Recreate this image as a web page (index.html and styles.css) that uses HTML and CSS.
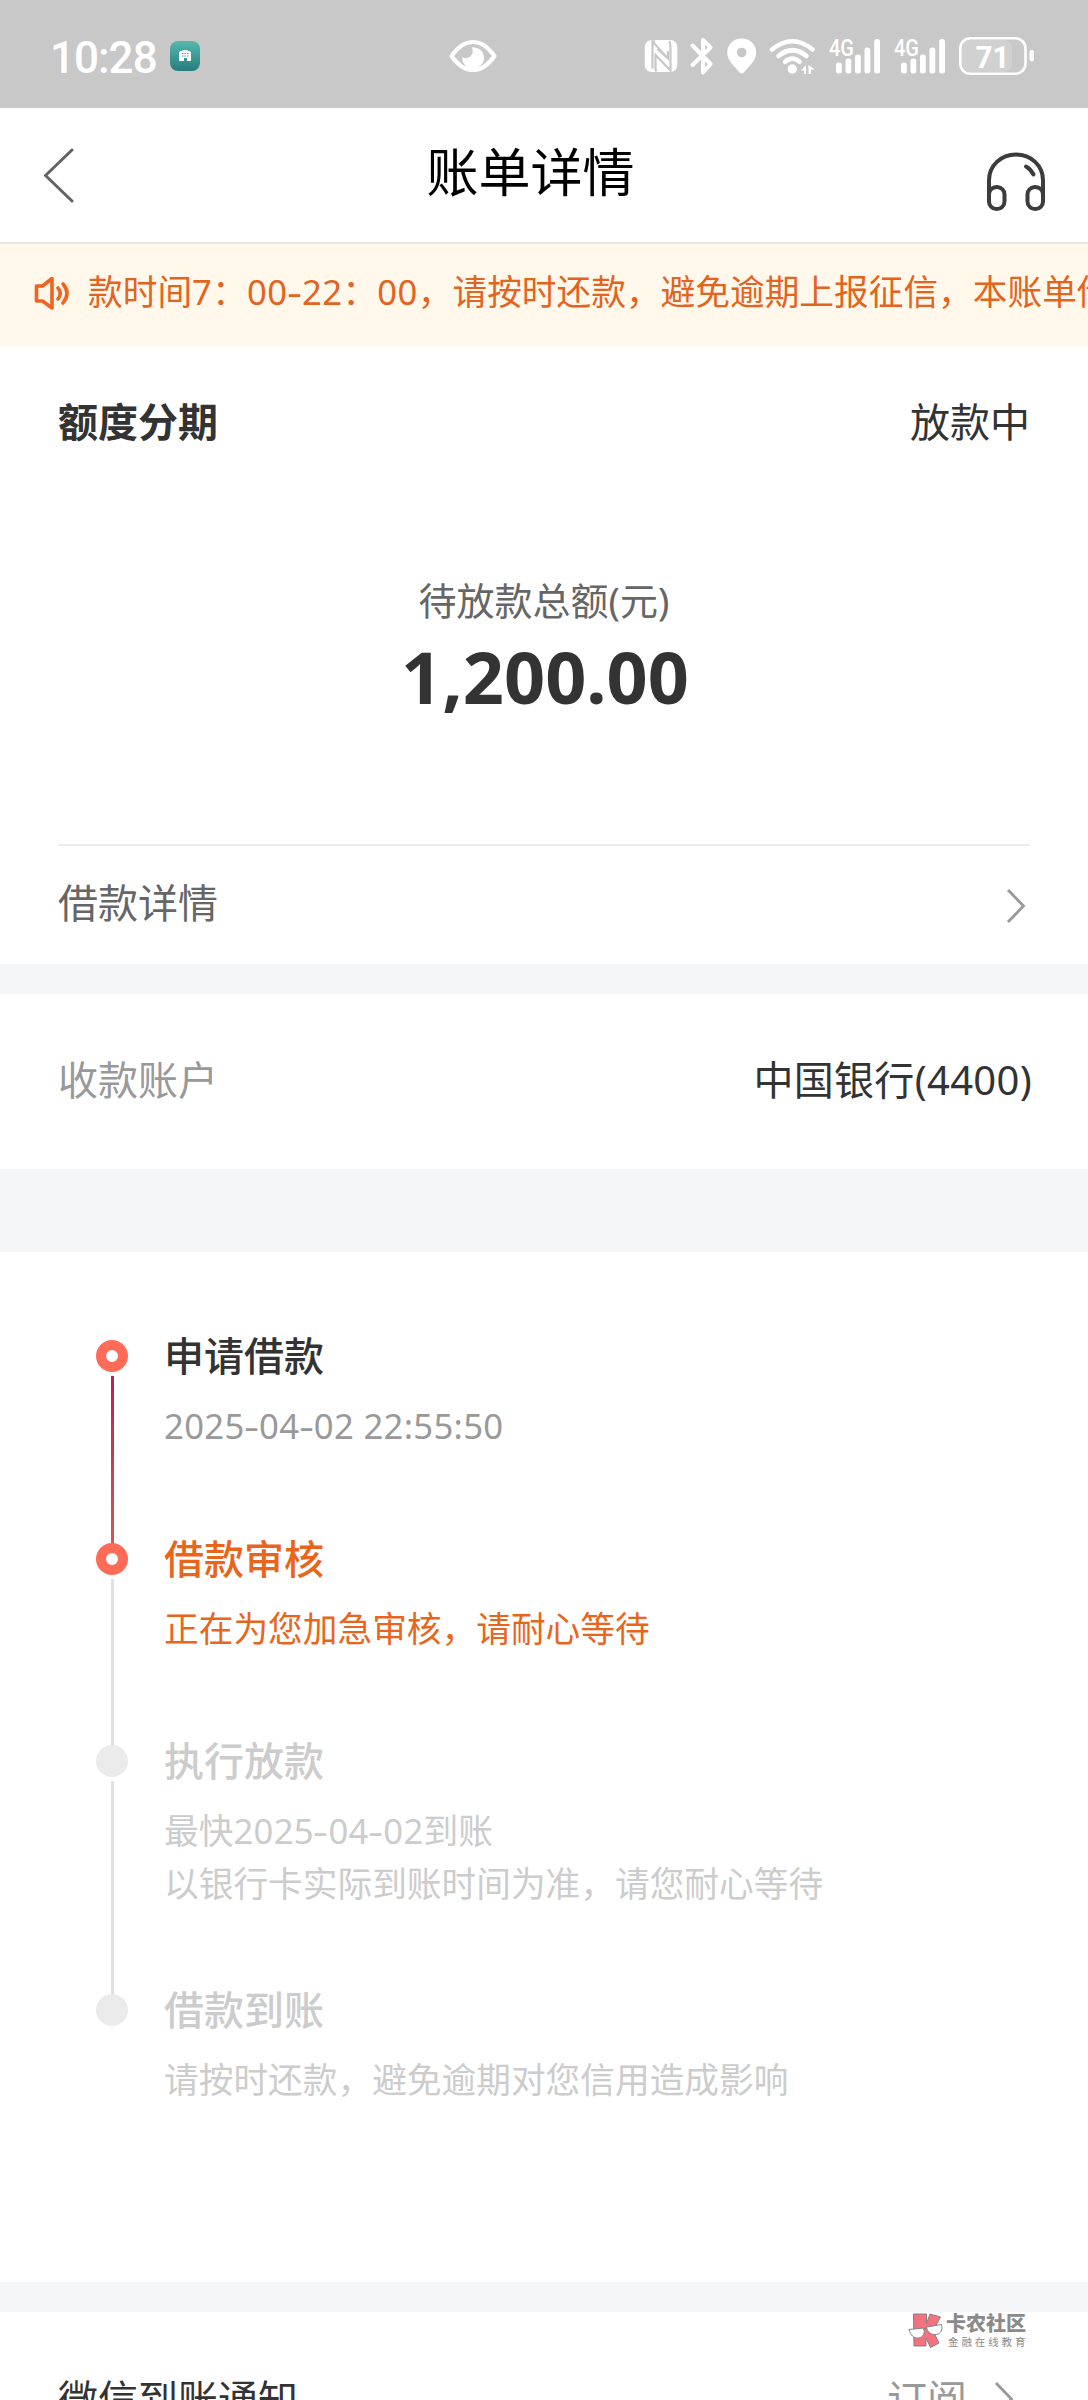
FILE: index.html
```html
<!DOCTYPE html>
<html lang="zh-CN">
<head>
<meta charset="utf-8">
<title>账单详情</title>
<link rel="stylesheet" href="styles.css">
</head>
<body>
<div class="page">
  <div class="status">
    <span class="clock">10:28</span>
    <svg class="app-icon" width="30" height="30" viewBox="0 0 30 30">
      <defs><linearGradient id="teal" x1="0" y1="0" x2="0" y2="1"><stop offset="0" stop-color="#55b9ae"/><stop offset="1" stop-color="#287c7e"/></linearGradient></defs>
      <rect width="30" height="30" rx="8" fill="url(#teal)"/>
      <path d="M9 20V12q0-2 2-2h1l1-1h4l1 1h1q2 0 2 2v8h-4v-3h-3v3z" fill="#fff"/>
      <path d="M12 12.500h1.500M14.500 12.500h1.500M17 12.500h1.500M12 15h1.500M14.500 15h1.500M17 15h1.500" stroke="#4c9d9a" stroke-width="1.200"/>
    </svg>
    <svg class="eye" width="48" height="34" viewBox="0 0 48 34">
      <path d="M2.500 17C9 7.500 16 3 24 3s15 4.500 21.500 14C39 26.500 32 31 24 31S9 26.500 2.500 17z" fill="none" stroke="#fff" stroke-width="4" stroke-linejoin="round"/>
      <path d="M23 8.200a10.800 10.800 0 1 1-9.600 9.500c1.600 1.800 4.600 1.900 7 .3 3.500-2.300 4-5.800 2.600-9.800z" fill="#fff"/>
    </svg>
    <svg class="tray" width="392" height="40" viewBox="644 36 392 40" fill="#fff">
      <rect x="644.700" y="40" width="32.600" height="32" rx="7"/>
      <path d="M652.500 68.500V41.500L668 58.500V51M655 41l-2.500 1M669.500 41q1 3 1 8v21.500L655.500 55v6M655.500 55v13.500q0 2 1 3M657.500 49l10.500 9.500" fill="none" stroke="#c8c8c8" stroke-width="2.200"/>
      <path d="M692.500 45.500L710.500 64l-7.500 8.500V40l7.500 7.500-18 17.500" fill="none" stroke="#fff" stroke-width="4" stroke-linecap="round" stroke-linejoin="round"/>
      <path fill-rule="evenodd" d="M741.700 38.500c-8 0-14.500 6-14.500 14 0 8.500 8 14.500 11.500 19 2 2.500 4 2.500 6 0 3.500-4.500 11.500-10.500 11.500-19 0-8-6.500-14-14.500-14zm0 9.200a4.800 4.800 0 1 1 0 9.600 4.800 4.800 0 0 1 0-9.600z"/>
      <g fill="none" stroke="#fff" stroke-width="4.600" stroke-linecap="round">
        <path d="M772 49.500Q792.500 33 812.500 49.500"/>
        <path d="M778.500 56Q792.500 44.500 806.500 56"/>
        <path d="M785 61.800Q792.500 55.500 799.500 61.800"/>
      </g>
      <circle cx="792.300" cy="69" r="4.700"/>
      <path d="M801 70.500l5-5.500v9h-2v-3.500zM808.500 65l6.500 4.500h-4V74h-2.500z"/>
      <text class="net" x="829" y="56" textLength="25" lengthAdjust="spacingAndGlyphs">4G</text>
      <g id="bars">
        <rect x="836" y="62.500" width="5.800" height="11" rx="2.500"/>
        <rect x="845.500" y="58.500" width="5.800" height="15" rx="2.500"/>
        <rect x="855" y="54.500" width="5.800" height="19" rx="2.500"/>
        <rect x="864.500" y="47.500" width="5.800" height="26" rx="2.500"/>
        <rect x="874.200" y="39" width="5.800" height="34.500" rx="2.500"/>
      </g>
      <text class="net" x="894" y="56" textLength="25" lengthAdjust="spacingAndGlyphs">4G</text>
      <use href="#bars" x="65"/>
      <rect x="962" y="40" width="50" height="32" rx="8" fill="#d1d1d1"/>
      <rect x="960.300" y="38.300" width="65.200" height="35.500" rx="10" fill="none" stroke="#fff" stroke-width="2.600"/>
      <rect x="1029.500" y="50" width="4.500" height="11.500" rx="2.200"/>
      <text class="level" x="975.500" y="67.500" textLength="34" lengthAdjust="spacingAndGlyphs">71</text>
    </svg>
  </div>

  <div class="header">
    <svg class="back" width="34" height="56" viewBox="0 0 34 56"><path d="M32 3L5.500 28.500 32 54" fill="none" stroke="#606264" stroke-width="3" stroke-linecap="round" stroke-linejoin="round"/></svg>
    <h1>账单详情</h1>
    <svg class="service" width="60" height="60" viewBox="0 0 60 60" fill="none" stroke="#3c3c3e" stroke-width="4">
      <path d="M3 49V29.500C3 14.500 15 3.500 30 3.500s27 11 27 26V49"/>
      <rect x="3" y="36" width="15.500" height="22" rx="7.500"/>
      <rect x="41.500" y="36" width="15.500" height="22" rx="7.500"/>
      <path d="M40 15.500q4.500 2.500 7.500 8" stroke-linecap="round"/>
    </svg>
  </div>

  <div class="notice">
    <svg width="38" height="36" viewBox="0 0 38 36" fill="none" stroke="#f06421" stroke-width="3.600" stroke-linejoin="round">
      <path d="M3.500 11v15h6l9.500 7V3.500L9.500 11z"/>
      <path d="M25 13q4.500 5 0 11M30 9q8 9 0 19" stroke-linecap="round"/>
    </svg>
    <p>款时间<span class="num">7</span>：<span class="num">00<span class="dash">-</span>22</span>：<span class="num">00</span>，请按时还款，避免逾期上报征信，本账单借</p>
  </div>

  <section class="summary">
    <div class="row top"><strong>额度分期</strong><span>放款中</span></div>
    <div class="total">
      <p class="caption">待放款总额(元)</p>
      <p class="amount">1,200.00</p>
    </div>
    <div class="row link"><span>借款详情</span>
      <svg class="chev" width="20" height="36" viewBox="0 0 20 36"><path d="M2 2l15.500 16L2 34" fill="none" stroke="#999" stroke-width="2.800"/></svg>
    </div>
  </section>

  <section class="account row"><span class="label">收款账户</span><span class="bank">中国银行(4400)</span></section>

  <section class="progress">
    <ol>
      <li class="done"><i class="dot"></i><h2>申请借款</h2><p class="date">2025<span class="dash">-</span>04<span class="dash">-</span>02 22:55:50</p></li>
      <li class="now"><i class="dot"></i><h2>借款审核</h2><p>正在为您加急审核，请耐心等待</p></li>
      <li class="long"><i class="dot"></i><h2>执行放款</h2><p>最快<span class="date">2025<span class="dash">-</span>04<span class="dash">-</span>02</span>到账<br>以银行卡实际到账时间为准，请您耐心等待</p></li>
      <li class="last"><i class="dot"></i><h2>借款到账</h2><p>请按时还款，避免逾期对您信用造成影响</p></li>
    </ol>
  </section>

  <section class="subscribe row"><span>微信到账通知</span>
    <span class="action">订阅
      <svg class="chev" width="20" height="36" viewBox="0 0 20 36"><path d="M2 2l15.500 16L2 34" fill="none" stroke="#999" stroke-width="2.800"/></svg>
    </span>
  </section>

  <div class="watermark">
    <svg width="36" height="37" viewBox="0 0 36 37" stroke="#858083" stroke-width="1">
      <path d="M5.500 2h13v9.500L22 2l10.500 3-7.500 14 6 12-8.500 4.500-4.500-9.500V34H6z" fill="#f4717f"/>
      <path d="M1 17.500L15.500 16c2 5-.5 9.500-5 10-5 .5-8-3-9.500-8.500z" fill="#fff"/>
      <path d="M18.500 15L33.500 12.500c1.500 5-1 9.500-5 10-5 .5-9-1.500-10-7.500z" fill="#fff"/>
      <path d="M15 17.500q2-2.500 4-1" fill="none"/>
    </svg>
    <div><b>卡农社区</b><small>金融在线教育</small></div>
  </div>
</div>
</body>
</html>
```
FILE: styles.css
```css
* { box-sizing: border-box; margin: 0; padding: 0; }

body {
  background: #f5f6f8;
  color: #333;
  font-family: "Noto Sans", "Noto Sans CJK SC", sans-serif;
  font-size: 40px;
  line-height: 54px;
}

svg { display: block; flex: none; }

.page {
  position: relative;
  width: 1088px;
  height: 2400px;
  overflow: hidden;
}

.row { display: flex; justify-content: space-between; align-items: center; }

/* system status bar */
.status {
  display: flex;
  align-items: flex-start;
  height: 108px;
  padding: 37px 52px 0 50px;
  background: #c8c8c8;
  color: #fff;
}
.clock { width: 120px; font: 500 44px/42px Roboto, sans-serif; letter-spacing: -1px; }
.app-icon { margin-top: 4px; }
.eye { margin: 2px 0 0 249px; }
.tray { margin: -1px 0 0 auto; }
.net { font: 500 23px Roboto, sans-serif; }
.level { font: 700 32px Roboto, sans-serif; }

/* title bar */
.header {
  display: flex;
  align-items: flex-start;
  justify-content: space-between;
  height: 136px;
  padding: 39px 42px 0 40px;
  background: #fff;
  border-bottom: 2px solid #e6e6e6;
}
.header h1 { color: #000; font-size: 52px; font-weight: 400; line-height: 52px; margin: -1px 0 0 1px; }
.service { margin-top: 4px; }

.notice {
  display: flex;
  height: 101px;
  padding: 21px 0 0 33px;
  gap: 17px;
  background: #fff8eb;
  overflow: hidden;
}
.notice svg { margin-top: 10px; }
.notice p { color: #e2641f; font-size: 34.700px; white-space: nowrap; line-height: 54px; }
.num { letter-spacing: .4px; }
.dash { display: inline-block; line-height: 1; transform: scaleX(1.350); margin: 0 1.500px; }

/* amount summary */
.summary { height: 619px; padding: 50px 58px 0; background: #fff; }
.summary .top { height: 54px; }
.total { height: 397px; padding-top: 124px; text-align: center; border-bottom: 2px solid #ebebeb; }
.caption { color: #666; font-size: 38px; line-height: 54px; }
.amount { font-size: 72px; font-weight: 700; line-height: 90px; margin-top: 4px; padding-left: 2px; }
.link { height: 114px; color: #666; }
.link .chev { margin: 6px 4px 0 0; }

.account { height: 175px; margin-top: 30px; padding: 0 56px 4px 58px; background: #fff; }
.label { color: #999; }
.bank { letter-spacing: .3px; }

/* loan progress */
.progress { height: 1030px; margin-top: 83px; padding: 77px 58px 0 96px; background: #fff; }
.progress ol { list-style: none; }
.progress li {
  position: relative;
  height: 202.500px;
  padding-left: 68px;
  color: #ccc;
}
.progress li.long { height: 248.500px; }
.progress li::before {
  content: "";
  position: absolute;
  left: 15px;
  top: 47px;
  bottom: -13px;
  width: 3px;
  background: #e0e0e0;
}
.progress li.done::before { background: linear-gradient(#bd1f52, #d05a52); }
.progress li.last::before { display: none; }
.dot {
  position: absolute;
  left: 0;
  top: 11px;
  z-index: 1;
  width: 32px;
  height: 32px;
  border-radius: 50%;
  background: #ebebeb;
}
.done .dot, .now .dot { background: #fff; border: 10px solid #ff6b57; }
.progress h2 { font-size: 40px; font-weight: 500; line-height: 54px; }
.progress p { margin-top: 16px; font-size: 34.700px; line-height: 53px; white-space: nowrap; }
.progress .done h2 { color: #333; }
.progress .done p { color: #999; }
.progress .now { color: #e8661c; }
.date { letter-spacing: .3px; }

.subscribe { height: 174px; margin-top: 30px; padding: 0 74px 0 58px; background: #fff; }
.action { display: flex; align-items: center; gap: 27px; color: #999; }

/* community mark over the lower right corner */
.watermark {
  position: absolute;
  left: 908px;
  top: 2312px;
  display: flex;
  gap: 2px;
  color: #8b8b8b;
}
.watermark b { display: block; font-size: 20px; font-weight: 900; line-height: 24px; }
.watermark small { display: block; margin: -1px 0 0 2px; font-size: 10.500px; line-height: 14px; letter-spacing: 2.900px; white-space: nowrap; }
```
